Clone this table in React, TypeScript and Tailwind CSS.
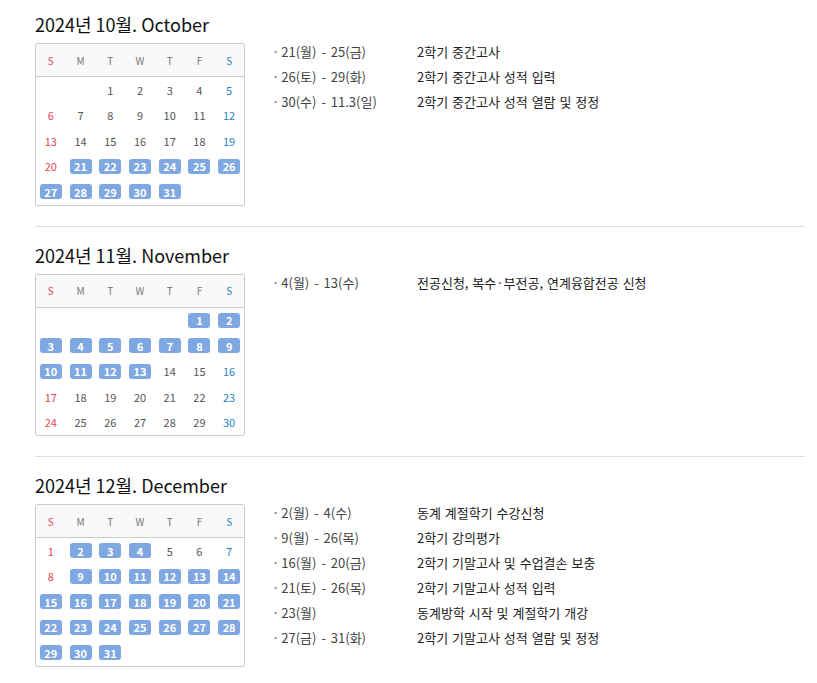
import React from 'react';

type Month = {
  title: string;
  startDay: number; // 0 = Sunday
  days: number;
  marked: number[];
  events: { date: string; text: string }[];
};

const range = (a: number, b: number) => Array.from({ length: b - a + 1 }, (_, i) => a + i);

const MONTHS: Month[] = [
  {
    title: '2024년 10월. October',
    startDay: 2,
    days: 31,
    marked: range(21, 31),
    events: [
      { date: '21(월) - 25(금)', text: '2학기 중간고사' },
      { date: '26(토) - 29(화)', text: '2학기 중간고사 성적 입력' },
      { date: '30(수) - 11.3(일)', text: '2학기 중간고사 성적 열람 및 정정' },
    ],
  },
  {
    title: '2024년 11월. November',
    startDay: 5,
    days: 30,
    marked: range(1, 13),
    events: [{ date: '4(월) - 13(수)', text: '전공신청, 복수·부전공, 연계융합전공 신청' }],
  },
  {
    title: '2024년 12월. December',
    startDay: 0,
    days: 31,
    marked: [2, 3, 4, ...range(9, 31)],
    events: [
      { date: '2(월) - 4(수)', text: '동계 계절학기 수강신청' },
      { date: '9(월) - 26(목)', text: '2학기 강의평가' },
      { date: '16(월) - 20(금)', text: '2학기 기말고사 및 수업결손 보충' },
      { date: '21(토) - 26(목)', text: '2학기 기말고사 성적 입력' },
      { date: '23(월)', text: '동계방학 시작 및 계절학기 개강' },
      { date: '27(금) - 31(화)', text: '2학기 기말고사 성적 열람 및 정정' },
    ],
  },
];

const WEEK = ['S', 'M', 'T', 'W', 'T', 'F', 'S'];

function Calendar({ month }: { month: Month }) {
  const cells: (number | null)[] = [
    ...Array(month.startDay).fill(null),
    ...range(1, month.days),
  ];
  while (cells.length % 7) cells.push(null);

  return (
    <div className="w-[210px] shrink-0 rounded-[2px] border border-[#cccccc] bg-white">
      <div className="grid h-[33px] grid-cols-7 items-center border-b border-[#cccccc] bg-[#f9f9f9] text-[10px]">
        {WEEK.map((d, i) => (
          <span
            key={i}
            className={`text-center ${i === 0 ? 'text-[#e3445c]' : i === 6 ? 'text-[#1d83c6]' : 'text-[#777777]'}`}
          >
            {d}
          </span>
        ))}
      </div>
      <div className="grid grid-cols-7 text-[11px]">
        {cells.map((n, i) => {
          const col = i % 7;
          const on = n !== null && month.marked.includes(n);
          return (
            <div key={i} className="flex h-[25.5px] items-center justify-center">
              {n !== null &&
                (on ? (
                  <span className="flex h-[15px] w-[22px] items-center justify-center rounded-[3px] bg-[#7fa7e1] font-bold text-white">
                    {n}
                  </span>
                ) : (
                  <span
                    className={
                      col === 0 ? 'text-[#e3445c]' : col === 6 ? 'text-[#1d83c6]' : 'text-[#555555]'
                    }
                  >
                    {n}
                  </span>
                ))}
            </div>
          );
        })}
      </div>
    </div>
  );
}

export default function App() {
  return (
    <div
      className="min-h-screen bg-white"
      style={{ fontFamily: '"Noto Sans CJK KR", "Noto Sans", sans-serif' }}
    >
      <div className="ml-[35px] w-[770px]">
        {MONTHS.map((m, idx) => (
          <section
            key={m.title}
            className={`${idx === 0 ? 'pt-[10px]' : 'pt-[14px]'} ${
              idx < MONTHS.length - 1 ? 'border-b border-[#dddddd] pb-[20px]' : ''
            }`}
          >
            <h2 className="mb-[5px] text-[18px] leading-[28px] text-[#111111]">{m.title}</h2>
            <div className="flex gap-[27px]">
              <Calendar month={m} />
              <ul className="text-[13px] text-[#333333]">
                {m.events.map((e) => (
                  <li key={e.date} className="flex h-[25px] leading-[18px]">
                    <span className="w-[145px] shrink-0 text-[#444444] [word-spacing:2px]">
                      <span className="mr-[2px]">·</span>
                      {e.date}
                    </span>
                    <span className="text-[#222222] [word-spacing:1px]">{e.text}</span>
                  </li>
                ))}
              </ul>
            </div>
          </section>
        ))}
      </div>
    </div>
  );
}
